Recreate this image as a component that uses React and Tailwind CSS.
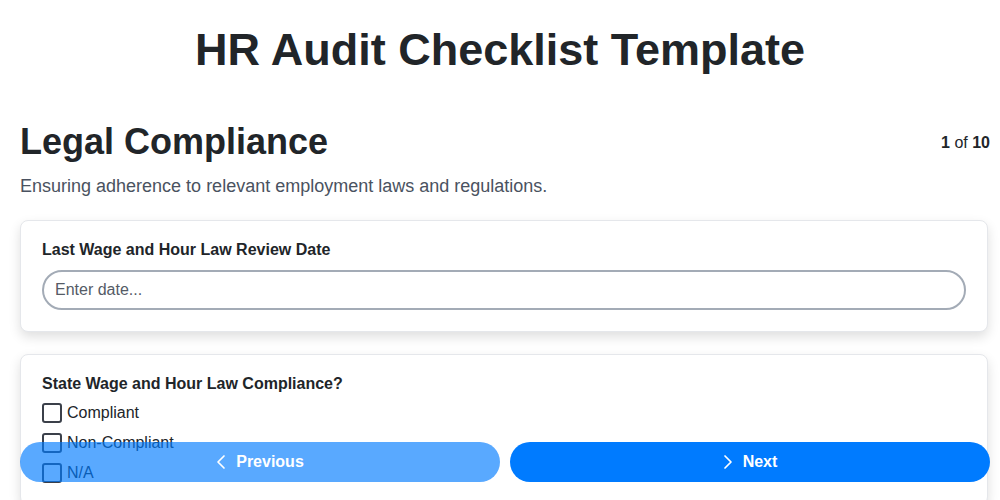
import React from "react";
import { ChevronLeft, ChevronRight } from "lucide-react";

export default function App() {
  const options = ["Compliant", "Non-Compliant", "N/A"];
  return (
    <div
      className="min-h-screen bg-white text-[#212529]"
      style={{ fontFamily: '"Liberation Sans", Arial, sans-serif' }}
    >
      <h1 className="pt-[24px] text-center text-[45px] leading-[52px] font-bold">
        HR Audit Checklist Template
      </h1>
      <div className="pl-[20px] pr-[10px] pb-[80px]">
        <div className="mt-[44px] flex items-center justify-between">
          <h2 className="text-[36px] leading-[44px] font-bold">Legal Compliance</h2>
          <div className="pt-[2px] text-[16px]">
            <span className="font-bold">1</span> of <span className="font-bold">10</span>
          </div>
        </div>
        <p className="mt-[11px] text-[18px] leading-[22px] text-[#4a5260]">
          Ensuring adherence to relevant employment laws and regulations.
        </p>

        <div className="mt-[23px] mr-[2px] rounded-[8px] border border-[#e5e7eb] bg-white px-[21px] pt-[19px] pb-[21px] shadow-[0_5px_12px_rgba(0,0,0,0.13)]">
          <label className="block text-[16px] leading-[20px] font-bold">
            Last Wage and Hour Law Review Date
          </label>
          <input
            type="text"
            placeholder="Enter date..."
            className="mt-[10px] block h-[40px] w-full rounded-full border-2 border-[#a3abb6] px-[11px] text-[16px] text-[#212529] placeholder:text-[#555b66] outline-none"
          />
        </div>

        <div className="mt-[22px] mr-[2px] rounded-[8px] border border-[#e5e7eb] bg-white px-[21px] pt-[19px] pb-[21px] shadow-[0_5px_12px_rgba(0,0,0,0.13)]">
          <div className="text-[16px] leading-[20px] font-bold">
            State Wage and Hour Law Compliance?
          </div>
          <div className="mt-[9px] flex flex-col gap-[10px]">
            {options.map((o) => (
              <label key={o} className="flex items-center gap-[5px] text-[16px] leading-[20px]">
                <span className="inline-block h-[20px] w-[20px] rounded-[3px] border-2 border-[#3b404a] bg-white" />
                {o}
              </label>
            ))}
          </div>
        </div>
      </div>

      <div className="fixed bottom-[18px] left-[20px] right-[10px] flex gap-[10px]">
        <button className="flex h-[40px] flex-1 items-center justify-center gap-[3px] rounded-full bg-[#007bff] pr-[7px] text-[16px] font-bold text-white opacity-65">
          <ChevronLeft size={24} strokeWidth={1.7} />
          Previous
        </button>
        <button className="flex h-[40px] flex-1 items-center justify-center gap-[3px] rounded-full bg-[#007bff] pr-[7px] text-[16px] font-bold text-white">
          <ChevronRight size={24} strokeWidth={1.7} />
          Next
        </button>
      </div>
    </div>
  );
}
